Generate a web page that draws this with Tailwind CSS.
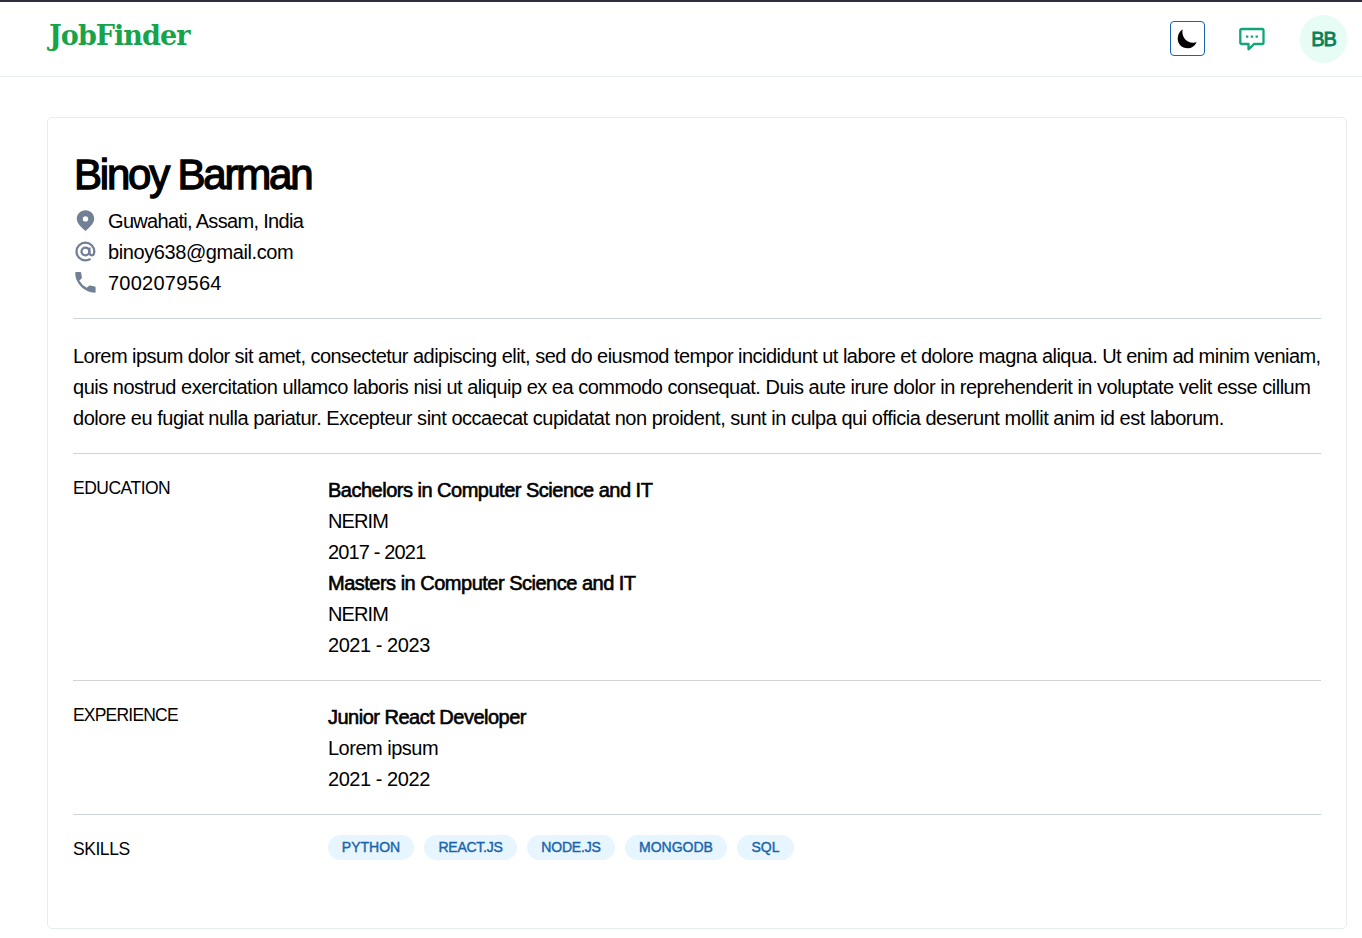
<!DOCTYPE html>
<html lang="en">
<head>
<meta charset="utf-8">
<title>JobFinder</title>
<script src="https://cdn.jsdelivr.net/npm/@tailwindcss/browser@4"></script>
</head>
<body class="h-[938px] overflow-hidden bg-white text-black font-['Liberation_Sans',sans-serif] text-[20px] leading-[31px]">
<header class="flex h-[77px] justify-between border-t-2 border-b border-t-[#2f2e41] border-b-[#e9ecef] pr-[15px] pl-[49px]">
  <a class="pt-[16px] font-['DejaVu_Serif',serif] text-[27px] leading-[36px] font-bold tracking-[-0.95px] text-[#16a34a]">JobFinder</a>
  <div class="flex items-start pt-[13px]">
    <button class="mt-[6px] flex size-[35px] items-center justify-center rounded-[4px] border border-[#1864ab]">
      <svg class="size-[21px]" viewBox="0 0 21 21"><path d="M5.600 1.500C4.200 9 9.800 16.600 19.600 14.300C17.600 18.300 14.600 20.300 10.600 20.300C4.900 20.300 0.700 16.200 0.700 10.500C0.700 6.500 2.600 3.300 5.600 1.500Z"/></svg>
    </button>
    <svg class="mt-[10px] ml-[33px] size-[28px]" viewBox="0 0 28 28" fill="none" stroke="#12a579" stroke-width="2.3" stroke-linejoin="round"><path d="M4 4H24Q25.500 4 25.500 5.500V17.500Q25.500 19 24 19H16L10.500 24.300V19H4Q2.300 19 2.300 17.500V5.500Q2.300 4 4 4Z"/><path stroke="none" fill="#12a579" d="M8 10.500h2.300v2.300H8zM12.800 10.500h2.300v2.300h-2.300zM17.600 10.500h2.300v2.300h-2.300z"/></svg>
    <div class="ml-[34px] flex h-[48px] w-[47px] items-center justify-center rounded-full bg-[#e6fcf5] text-[20px] tracking-[-1.2px] text-[#087f5b] [-webkit-text-stroke:0.8px_#087f5b]">BB</div>
  </div>
</header>
<main class="mt-[40px] ml-[47px] h-[812px] w-[1300px] rounded-[5px] border border-[#e9ecef] px-[25px] pt-[28px]">
  <h1 class="h-[60px] pl-[1px] text-[42px] leading-[58px] tracking-[-2.2px] [-webkit-text-stroke:1.3px_black]">Binoy Barman</h1>
  <ul class="h-[113px] border-b border-[#ced4da]">
    <li class="flex gap-[11px]"><svg class="mt-[3px] size-[24px]" viewBox="0 0 24 24" fill="#718096"><path fill-rule="evenodd" d="M12.500 1.200C7.500 1.200 3.800 5 3.800 9.800C3.800 14.800 9 18.800 12.500 22C16 18.800 21.200 14.800 21.200 9.800C21.200 5 17.500 1.200 12.500 1.200ZM12.500 7.200a2.700 2.700 0 1 1 0 5.400a2.700 2.700 0 1 1 0-5.400Z"/></svg><span class="tracking-[-0.68px]">Guwahati, Assam, India</span></li>
    <li class="flex gap-[11px]"><svg class="mt-[3px] size-[24px]" viewBox="0 0 24 24" fill="none" stroke="#718096" stroke-width="2.300"><circle cx="12.400" cy="11.500" r="3.900"/><path d="M16.400 7.500V12.700Q16.600 15.300 19 15.300Q21.300 15.100 21.300 11.500A8.900 8.900 0 1 0 12.400 20.400Q15.300 20.400 17.600 18.900"/></svg><span class="tracking-[-0.41px]">binoy638@gmail.com</span></li>
    <li class="flex gap-[11px]"><svg class="mt-[3px] size-[24px]" viewBox="0 0 24 24" fill="#718096"><path d="M3.200 1H7.300Q8 1 8.200 1.800L8.900 6.600Q8.900 7.300 8.400 7.800L6.300 9.600Q8.900 14.300 13.800 16.800L15.700 15Q16.300 14.500 17 14.600L21.800 15.500Q22.600 15.700 22.600 16.500V20.900Q22.600 21.700 21.700 21.700Q14.500 21.700 8.400 16Q2.200 9.800 2.200 2Q2.300 1 3.200 1Z"/></svg><span class="tracking-[0.25px]">7002079564</span></li>
  </ul>
  <div class="h-[135px] border-b border-[#ced4da] pt-[22px] whitespace-nowrap">
    <p class="tracking-[-0.531px]">Lorem ipsum dolor sit amet, consectetur adipiscing elit, sed do eiusmod tempor incididunt ut labore et dolore magna aliqua. Ut enim ad minim veniam,</p>
    <p class="tracking-[-0.497px]">quis nostrud exercitation ullamco laboris nisi ut aliquip ex ea commodo consequat. Duis aute irure dolor in reprehenderit in voluptate velit esse cillum</p>
    <p class="tracking-[-0.478px]">dolore eu fugiat nulla pariatur. Excepteur sint occaecat cupidatat non proident, sunt in culpa qui officia deserunt mollit anim id est laborum.</p>
  </div>
  <section class="flex h-[227px] border-b border-[#ced4da] pt-[21px]">
    <h2 class="w-[255px] text-[17.500px] leading-[27px] tracking-[-0.5px]">EDUCATION</h2>
    <div>
      <h3 class="tracking-[-0.5px] [-webkit-text-stroke:0.6px_black]">Bachelors in Computer Science and IT</h3>
      <p class="tracking-[-0.9px]">NERIM</p>
      <p class="tracking-[-0.85px]">2017 - 2021</p>
      <h3 class="tracking-[-0.5px] [-webkit-text-stroke:0.6px_black]">Masters in Computer Science and IT</h3>
      <p class="tracking-[-0.9px]">NERIM</p>
      <p class="tracking-[-0.45px]">2021 - 2023</p>
    </div>
  </section>
  <section class="flex h-[134px] border-b border-[#ced4da] pt-[21px]">
    <h2 class="w-[255px] text-[17.500px] leading-[27px] tracking-[-0.8px]">EXPERIENCE</h2>
    <div>
      <h3 class="tracking-[-0.5px] [-webkit-text-stroke:0.6px_black]">Junior React Developer</h3>
      <p class="tracking-[-0.5px]">Lorem ipsum</p>
      <p class="tracking-[-0.45px]">2021 - 2022</p>
    </div>
  </section>
  <section class="flex pt-[20px]">
    <h2 class="w-[255px] pt-[1px] text-[17.500px] leading-[27px] tracking-[-0.45px]">SKILLS</h2>
    <div class="flex gap-[10px] text-center text-[14px] leading-[25px] text-[#1864ab] [-webkit-text-stroke:0.4px_#1864ab]">
      <span class="h-[25px] w-[86px] rounded-full bg-[#e7f5ff]">PYTHON</span>
      <span class="h-[25px] w-[93px] rounded-full bg-[#e7f5ff] tracking-[-0.25px]">REACT.JS</span>
      <span class="h-[25px] w-[88px] rounded-full bg-[#e7f5ff] tracking-[-0.2px]">NODE.JS</span>
      <span class="h-[25px] w-[102px] rounded-full bg-[#e7f5ff]">MONGODB</span>
      <span class="h-[25px] w-[57px] rounded-full bg-[#e7f5ff]">SQL</span>
    </div>
  </section>
</main>
</body>
</html>
